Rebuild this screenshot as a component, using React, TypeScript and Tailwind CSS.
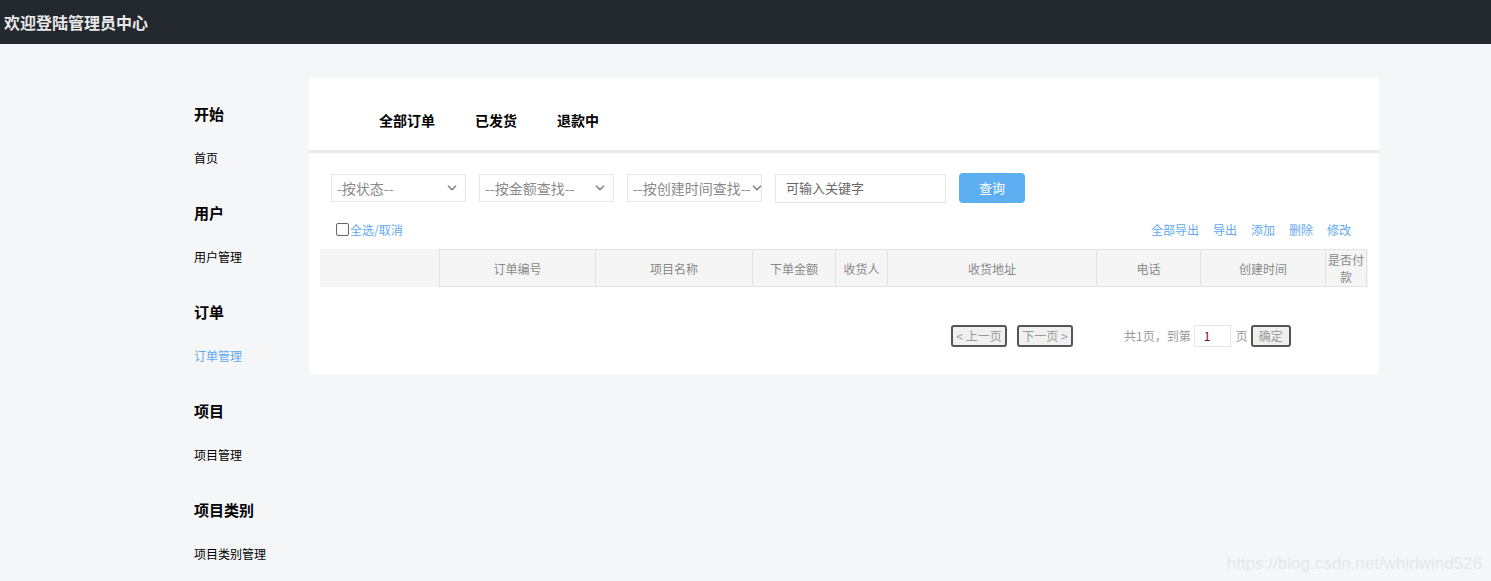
import { ChevronDown } from 'lucide-react';

const FONT = { fontFamily: '"Microsoft YaHei", "Noto Sans CJK SC", "Noto Sans", sans-serif' };

const MENU = [
  { title: '开始', link: '首页' },
  { title: '用户', link: '用户管理' },
  { title: '订单', link: '订单管理', active: true },
  { title: '项目', link: '项目管理' },
  { title: '项目类别', link: '项目类别管理' },
];

const COLUMNS = [
  { label: '订单编号', w: 'w-[157px]' },
  { label: '项目名称', w: 'w-[157px]' },
  { label: '下单金额', w: 'w-[83px]' },
  { label: '收货人', w: 'w-[52px]' },
  { label: '收货地址', w: 'w-[209px]' },
  { label: '电话', w: 'w-[104px]' },
  { label: '创建时间', w: 'w-[125px]' },
  { label: '是否付款', w: 'w-[41px]' },
];

function FakeSelect({ label }: { label: string }) {
  return (
    <div className="flex h-[28px] w-[135px] items-center justify-between border border-[#e6e6e6] bg-white pl-[5px] pr-[6px] text-[14px] text-[#8a8a8a]">
      <span className="whitespace-nowrap">{label}</span>
      <ChevronDown size={14} strokeWidth={3} className="shrink-0 text-[#888]" />
    </div>
  );
}

function PageButton({ children, className = '' }: { children: React.ReactNode; className?: string }) {
  return (
    <button className={`flex h-[22px] items-center justify-center rounded-[3px] border-2 border-[#555] bg-[#f0f0f0] text-[12px] text-[#999] ${className}`}>
      {children}
    </button>
  );
}

export default function App() {
  return (
    <div className="relative h-[581px] overflow-hidden bg-[#f5f6f8]" style={FONT}>
      <header className="flex h-[44px] items-center bg-[#23272e] pl-[4px]">
        <h1 className="text-[16px] font-bold text-[#e8e8e8]">欢迎登陆管理员中心</h1>
      </header>

      <div className="flex">
        <aside className="w-[309px] shrink-0 pl-[194px] pt-[60px]">
          {MENU.map((m) => (
            <div key={m.title} className="h-[99px]">
              <div className="text-[15px] font-bold leading-[20px] text-black">{m.title}</div>
              <div className={`mt-[24px] text-[12px] leading-[20px] ${m.active ? 'text-[#5fa8f0]' : 'text-black'}`}>{m.link}</div>
            </div>
          ))}
        </aside>

        <main className="mt-[34px] w-[1070px]">
          <div className="flex h-[72px] items-end gap-[40px] rounded-t-[3px] bg-white pb-[19px] pl-[70px] shadow-[0_3px_0_#ebebeb] text-[14px] font-bold text-black">
            <span>全部订单</span>
            <span>已发货</span>
            <span>退款中</span>
          </div>

          <div className="mt-[3px] h-[221px] bg-white px-[11px] pt-[20px]">
            <div className="flex items-center pl-[11px]">
              <FakeSelect label="-按状态--" />
              <div className="ml-[13px]"><FakeSelect label="--按金额查找--" /></div>
              <div className="ml-[13px]"><FakeSelect label="--按创建时间查找--" /></div>
              <div className="ml-[13px] flex h-[29px] w-[171px] items-center border border-[#e6e6e6] pl-[10px] text-[13px] text-[#666]">
                可输入关键字
              </div>
              <button className="ml-[13px] h-[30px] w-[66px] rounded-[4px] bg-[#5eaff2] text-[13px] text-white">查询</button>
            </div>

            <div className="mt-[15px] flex h-[23px] items-center justify-between pl-[16px] pr-[17px] text-[12px] text-[#5fa8f0]">
              <label className="flex items-center">
                <span className="mr-px h-[13px] w-[13px] rounded-[2px] border border-[#666] bg-white" />
                全选/取消
              </label>
              <div className="flex gap-[14px]">
                <span>全部导出</span>
                <span>导出</span>
                <span>添加</span>
                <span>删除</span>
                <span>修改</span>
              </div>
            </div>

            <div className="mt-[8px] flex h-[38px] bg-[#f5f5f5] text-[12px] text-[#888]">
              <div className="w-[119px]" />
              {COLUMNS.map((c, i) => (
                <div
                  key={c.label}
                  className={`${c.w} flex items-center justify-center border-y border-r border-[#e2e2e2] text-center leading-[17px] ${i === 0 ? 'border-l' : ''}`}
                >
                  {c.label}
                </div>
              ))}
            </div>

            <div className="mt-[38px] flex items-center text-[12px] text-[#999]">
              <PageButton className="ml-[631px] w-[56px]">&lt; 上一页</PageButton>
              <PageButton className="ml-[10px] w-[56px]">下一页 &gt;</PageButton>
              <span className="ml-[51px]">共1页，到第</span>
              <div className="ml-[3px] flex h-[22px] w-[37px] items-center border border-[#e6e6e6] pl-[9px] text-[#800040]">1</div>
              <span className="ml-[5px]">页</span>
              <PageButton className="ml-[3px] w-[40px]">确定</PageButton>
            </div>
          </div>
        </main>
      </div>

      <div className="pointer-events-none absolute bottom-[5px] right-[9px] text-[17px] text-[#e6e7e9]" style={{ fontFamily: '"Liberation Sans", Arial, sans-serif' }}>
        https://blog.csdn.net/whirlwind526
      </div>
    </div>
  );
}
